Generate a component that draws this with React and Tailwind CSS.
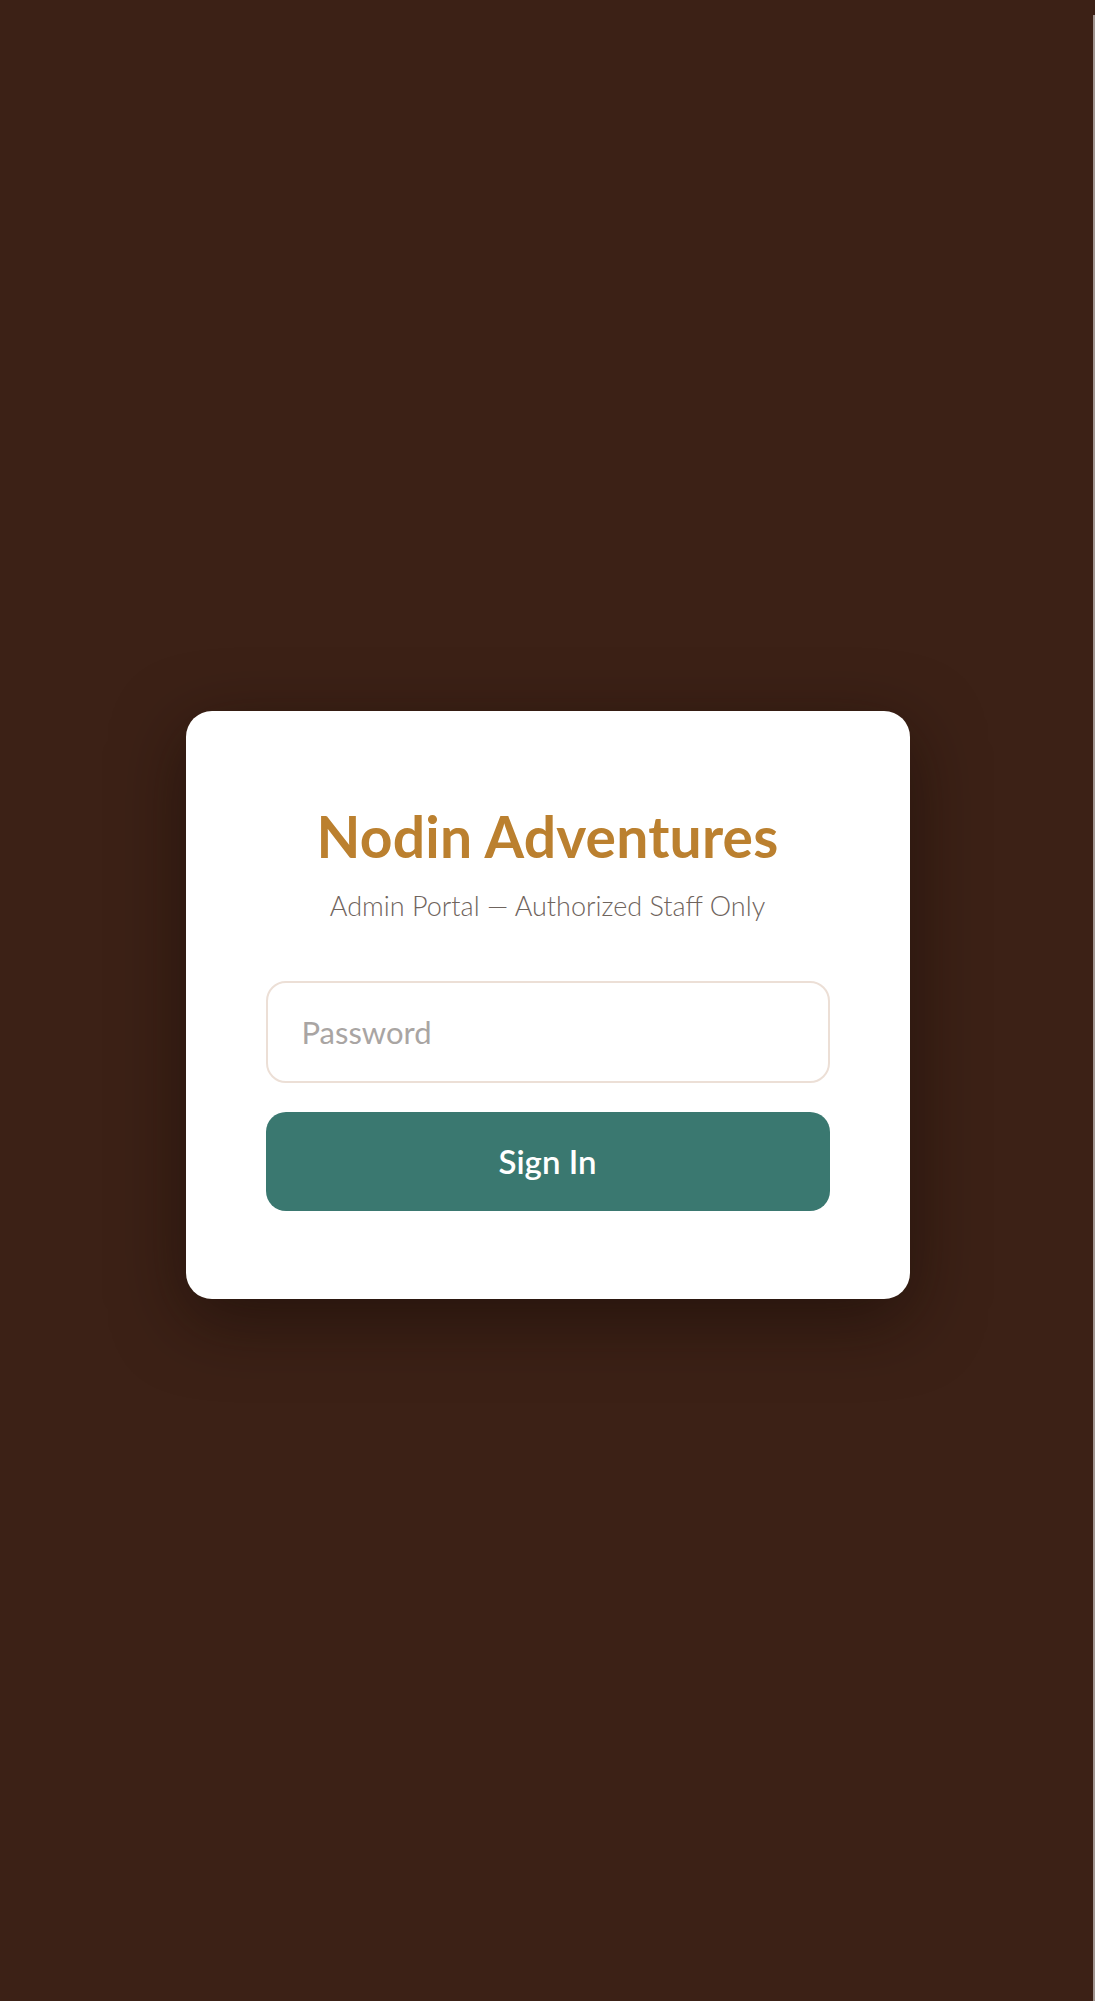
export default function App() {
  return (
    <div className="relative min-h-[2001px] w-full bg-[#3c2116] flex items-center justify-center pt-[9px] font-['Lato','Liberation_Sans',sans-serif]">
      <div className="w-[724px] bg-white rounded-[26px] shadow-[0_20px_70px_rgba(20,10,5,0.55)] px-[80px] pt-[97px] pb-[88px] flex flex-col items-center">
        <h1 className="text-[57px] leading-none font-bold text-[#bb802f] tracking-[0.2px]">Nodin Adventures</h1>
        <p className="mt-[27px] text-[27px] leading-none font-light text-[#6f645d]">
          Admin Portal — Authorized Staff Only
        </p>
        <input
          type="password"
          placeholder="Password"
          className="mt-[62px] w-full h-[102px] rounded-[20px] border-2 border-[#ecdfd6] bg-white px-[34px] text-[31px] text-[#3c2116] placeholder:text-[#a9a5a3] outline-none"
        />
        <button className="mt-[29px] w-full h-[99px] rounded-[20px] bg-[#3a7870] text-white text-[33px] font-semibold">
          Sign In
        </button>
      </div>
      <div className="absolute right-0 top-[15px] bottom-0 w-[2px] bg-[#a0948f]" />
    </div>
  );
}
